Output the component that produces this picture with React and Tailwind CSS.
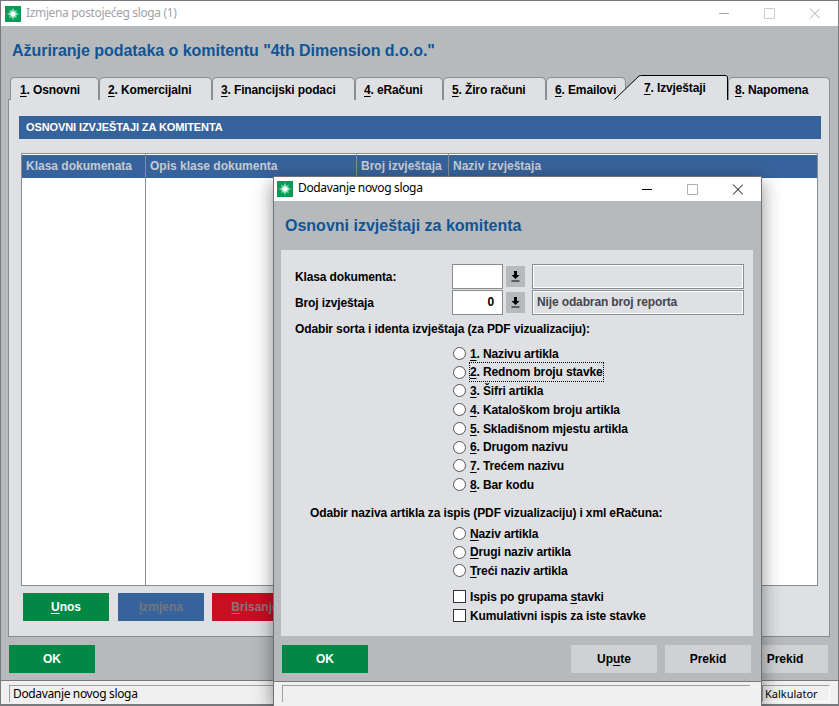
import React from "react";

const TABS = [
  { n: "1", label: "Osnovni", w: "w-[89px]", pad: "pl-[9px]" },
  { n: "2", label: "Komercijalni", w: "w-[113px]", pad: "pl-[8px]" },
  { n: "3", label: "Financijski podaci", w: "w-[143px]", pad: "pl-[8px]" },
  { n: "4", label: "eRačuni", w: "w-[88px]", pad: "pl-[8px]" },
  { n: "5", label: "Žiro računi", w: "w-[103px]", pad: "pl-[8px]" },
  { n: "6", label: "Emailovi", w: "w-[80px]", pad: "pl-[8px]" },
];

const SORT_OPTIONS = [
  ["1", "Nazivu artikla", "h-[19px]"],
  ["2", "Rednom broju stavke", "h-[18px]"],
  ["3", "Šifri artikla", "h-[19px]"],
  ["4", "Kataloškom broju artikla", "h-[19px]"],
  ["5", "Skladišnom mjestu artikla", "h-[19px]"],
  ["6", "Drugom nazivu", "h-[18px]"],
  ["7", "Trećem nazivu", "h-[19px]"],
  ["8", "Bar kodu", "h-[19px]"],
];

const AppIcon = () => (
  <svg width="16" height="16" viewBox="0 0 16 16" className="shrink-0">
    <rect width="16" height="16" fill="#0a9a55" />
    <circle cx="8" cy="8" r="4.5" fill="#7fe0b0" opacity="0.5" />
    <path d="M8 1 L8.7 7.3 L15 8 L8.7 8.7 L8 15 L7.3 8.7 L1 8 L7.3 7.3 Z" fill="#fff" />
    <path d="M3.5 3.5 L8 7 L12.5 3.5 L9 8 L12.5 12.5 L8 9 L3.5 12.5 L7 8 Z" fill="#fff" opacity="0.7" />
    <circle cx="8" cy="8" r="2.5" fill="#fff" />
  </svg>
);

const WinControls = ({ active }) => (
  <svg width="101" height="11" viewBox="0 0 101 11" className="ml-auto shrink-0">
    <path d="M0 5.5h10" stroke={active ? "#000" : "#a8a8a8"} fill="none" />
    <path d="M45.5 0.5h10v10h-10z" stroke={active ? "#b0b0b0" : "#cccccc"} fill="none" />
    <path d="M91 0.5l10 10M101 0.5l-10 10" stroke={active ? "#000" : "#a8a8a8"} fill="none" />
  </svg>
);

const Num = ({ children }) => <span className="underline underline-offset-2">{children}</span>;

const Btn = ({ className, children }) => (
  <div className={`w-[86px] h-[28px] flex items-center justify-center text-[12px] font-bold ${className}`}>
    {children}
  </div>
);

const Radio = () => (
  <span className="w-[13px] h-[13px] rounded-full border border-[#555] bg-[#fff] shrink-0" />
);

const DownBtn = () => (
  <div className="w-[19px] h-[21px] bg-[#b7babd] flex items-center justify-center ml-[3px] mr-[7px]">
    <svg width="9" height="11" viewBox="0 0 9 11">
      <path d="M3 0h3v4h2.5L4.5 8 0.5 4H3z M0.5 9.5h8v1h-8z" fill="#000" />
    </svg>
  </div>
);

const FormRow = ({ label, value, info, className }) => (
  <div className={`flex items-center ${className}`}>
    <div className="w-[157px] text-[12px] font-bold text-black">{label}</div>
    <div className="w-[51px] h-[25px] bg-white border border-[#8a8d90] text-[12px] font-bold text-right pr-[8px] leading-[23px] text-black">
      {value}
    </div>
    <DownBtn />
    <div className="w-[212px] h-[25px] bg-[#dfe0e4] border border-[#8a8d90] outline outline-1 -outline-offset-2 outline-white text-[12px] font-bold text-[#44444c] pl-[4px] leading-[23px]">
      {info}
    </div>
  </div>
);

export default function App() {
  return (
    <div className="relative w-[839px] h-[706px] overflow-hidden bg-[#77797c] font-['Liberation_Sans',sans-serif]">
      {/* main window */}
      <div className="absolute left-px top-px w-[837px] h-[703px] bg-[#b7babd] flex flex-col">
        <div className="h-[25px] bg-white flex items-center pl-[4px] pr-[18px] shrink-0">
          <AppIcon />
          <span className="ml-[5px] pb-[2px] text-[12px] tracking-[-0.35px] text-[#a2a2a8] font-['Noto_Sans',sans-serif]">Izmjena postojećeg sloga (1)</span>
          <WinControls />
        </div>
        <h1 className="pl-[11px] pt-[14px] h-[51px] shrink-0 text-[16px] leading-[21px] tracking-[-0.04px] font-bold text-[#0f5596]">
          Ažuriranje podataka o komitentu "4th Dimension d.o.o."
        </h1>

        <div className="flex pl-[9px] h-[22px] shrink-0 relative z-10 tracking-[-0.13px]">
          {TABS.map((t) => (
            <div
              key={t.n}
              className={`${t.w} ${t.pad} h-[23px] shrink-0 bg-[#dfe0e4] border border-[#8a8d90] border-b-0 rounded-t-[5px] text-[12px] font-bold text-black pt-[3px] whitespace-nowrap`}
            >
              <Num>{t.n}</Num>. {t.label}
            </div>
          ))}
          {/* active tab with slanted left edge */}
          <div className="relative w-[114px] h-[25px] -mt-[2px] -ml-[12px] shrink-0 text-[12px] font-bold text-black">
            <svg width="114" height="25" viewBox="0 0 114 25" className="absolute left-0 top-0">
              <path d="M0 25 L25 1 Q26 0 28 0 L111 0 Q113 0 113 2 L113 25 Z" fill="#dfe0e4" />
              <path d="M0.5 24.5 L25 1 Q26 0.5 28 0.5 L111 0.5 Q113 0.5 113.5 2 L113.5 25" fill="none" stroke="#000" />
            </svg>
            <span className="absolute left-[30px] top-[4px] whitespace-nowrap">
              <Num>7</Num>. Izvještaji
            </span>
          </div>
          <div className="w-[102px] h-[23px] shrink-0 bg-[#dfe0e4] border border-[#8a8d90] border-b-0 rounded-t-[5px] text-[12px] font-bold text-black pl-[6px] pt-[3px]">
            <Num>8</Num>. Napomena
          </div>
        </div>

        <div className="ml-[7px] w-[822px] h-[538px] shrink-0 bg-[#dfe0e4] border border-[#8a8d90] pl-[10px] pt-[16px]">
          <div className="w-[802px] h-[23px] bg-[#37639c] text-white text-[11px] tracking-[-0.1px] font-bold pl-[7px] leading-[23px]">
            OSNOVNI IZVJEŠTAJI ZA KOMITENTA
          </div>
          <div className="mt-[14px] ml-[2px] w-[797px] h-[433px] bg-white border border-[#8a8d90] flex">
            {[
              ["w-[124px]", "Klasa dokumenata"],
              ["w-[211px]", "Opis klase dokumenta"],
              ["w-[92px]", "Broj izvještaja"],
              ["flex-1", "Naziv izvještaja"],
            ].map(([w, title], i) => (
              <div key={title} className={`${w} h-full ${i < 3 ? "border-r border-[#8a8d90]" : ""}`}>
                <div className="h-[23px] mt-px bg-[#37639c] text-[#c5cbd3] text-[12px] font-bold pl-[4px] leading-[22px] whitespace-nowrap">
                  {title}
                </div>
              </div>
            ))}
          </div>
          <div className="flex mt-[7px] ml-[4px]">
            <Btn className="bg-[#008844] text-white"><Num>U</Num>nos</Btn>
            <Btn className="bg-[#37639c] text-[#72777f] ml-[9px]"><Num>I</Num>zmjena</Btn>
            <Btn className="bg-[#c80f22] text-[#8f7379] ml-[8px]"><Num>B</Num>risanje</Btn>
          </div>
        </div>

        <div className="flex pl-[8px] mt-[8px] shrink-0">
          <Btn className="bg-[#008844] text-white">OK</Btn>
          <Btn className="ml-auto mr-[10px] bg-[#cfd1d4] text-black">Prekid</Btn>
        </div>

        <div className="mt-[7px] flex-1 border-t border-[#77797c] bg-[#f0f0f0] flex pt-[4px] pl-[8px]">
          <div className="w-[745px] h-[17px] border-l border-t border-[#a0a0a0] text-[12px] tracking-[-0.35px] text-black pl-[3px] leading-[15px] font-['Noto_Sans',sans-serif]">
            Dodavanje novog sloga
          </div>
          <div className="ml-[8px] w-[68px] h-[17px] border border-[#a0a0a0] border-r-white border-b-white text-[11px] text-black pl-[2px] leading-[15px] font-['Noto_Sans',sans-serif]">
            Kalkulator
          </div>
        </div>
      </div>

      {/* modal dialog */}
      <div className="absolute left-[273px] top-[176px] w-[489px] h-[530px] bg-[#b7babd] border border-[#6f7275] border-b-0 shadow-[0_6px_18px_rgba(0,0,0,0.45)] flex flex-col">
        <div className="h-[24px] bg-white flex items-center pl-[3px] pr-[18px] shrink-0">
          <AppIcon />
          <span className="ml-[5px] pb-[2px] text-[12px] tracking-[-0.35px] text-black font-['Noto_Sans',sans-serif]">Dodavanje novog sloga</span>
          <WinControls active />
        </div>
        <h2 className="pl-[11px] pt-[15px] h-[49px] shrink-0 text-[16px] leading-[20px] font-bold text-[#0f5596]">
          Osnovni izvještaji za komitenta
        </h2>

        <div className="ml-[7px] w-[472px] h-[386px] shrink-0 bg-[#dfe0e4] pl-[14px] pt-[14px] text-[12px] font-bold text-black tracking-[-0.13px]">
          <FormRow label="Klasa dokumenta:" value="" info="" />
          <FormRow label="Broj izvještaja" value="0" info="Nije odabran broj reporta" className="mt-px" />
          <div className="mt-[7px] h-[14px] leading-[14px]">Odabir sorta i identa izvještaja (za PDF vizualizaciju):</div>
          <div className="mt-[8px] ml-[158px]">
            {SORT_OPTIONS.map(([n, label, h]) => (
              <div key={n} className={`${h} flex items-center gap-[4px]`}>
                <Radio />
                <span className={`whitespace-nowrap ${n === "2" ? "outline outline-1 outline-dotted outline-black" : ""}`}>
                  <Num>{n}</Num>. {label}
                </span>
              </div>
            ))}
          </div>
          <div className="mt-[12px] ml-[15px] h-[14px] leading-[14px]">
            Odabir naziva artikla za ispis (PDF vizualizaciju) i xml eRačuna:
          </div>
          <div className="mt-[4px] ml-[158px]">
            <div className="h-[19px] flex items-center gap-[4px]"><Radio /><span><Num>N</Num>aziv artikla</span></div>
            <div className="h-[18px] flex items-center gap-[4px]"><Radio /><span><Num>D</Num>rugi naziv artikla</span></div>
            <div className="h-[19px] flex items-center gap-[4px]"><Radio /><span><Num>T</Num>reći naziv artikla</span></div>
          </div>
          <div className="mt-[7px] ml-[158px]">
            <div className="h-[19px] flex items-center gap-[4px]">
              <span className="w-[13px] h-[13px] bg-white border border-[#333]" />
              <span>Ispis po grupama <Num>s</Num>tavki</span>
            </div>
            <div className="h-[19px] flex items-center gap-[4px]">
              <span className="w-[13px] h-[13px] bg-white border border-[#333]" />
              <span>Kumulativni ispis za iste stavke</span>
            </div>
          </div>
        </div>

        <div className="flex pl-[8px] mt-[9px] shrink-0">
          <Btn className="bg-[#008844] text-white">OK</Btn>
          <Btn className="ml-auto bg-[#cfd1d4] text-black">Up<Num>u</Num>te</Btn>
          <Btn className="ml-[8px] mr-[10px] bg-[#cfd1d4] text-black">Prekid</Btn>
        </div>

        <div className="mt-[8px] flex-1 border-t border-[#77797c] bg-[#f0f0f0] pt-[3px] pl-[8px]">
          <div className="w-[468px] h-[17px] border-l border-t border-[#a0a0a0]" />
        </div>
      </div>
    </div>
  );
}
